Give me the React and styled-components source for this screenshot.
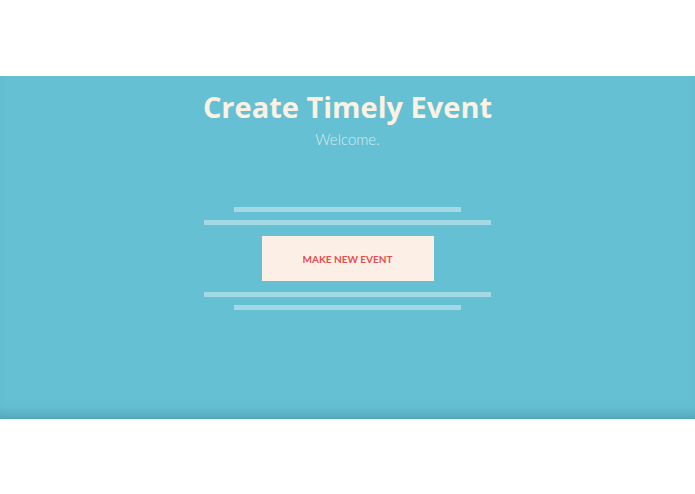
import React from 'react'
import styled, { createGlobalStyle } from 'styled-components'

const GlobalStyle = createGlobalStyle`
  body {
    margin: 0;
    background: #ffffff;
    font-family: "Open Sans", "Noto Sans", sans-serif;
  }
`;

export default function App() {
  return (
    <>
      <GlobalStyle />
      <Page>
        <Hero>
          <Title>Create Timely Event</Title>
          <Subtitle>Welcome.</Subtitle>
          <Actions>
            <Rule $short />
            <Rule />
            <MakeButton>Make new event</MakeButton>
            <Rule />
            <Rule $short />
          </Actions>
        </Hero>
      </Page>
    </>
  );
}

const Page = styled.div`
  padding-top: 76px;
  height: 494px;
  box-sizing: border-box;
`;

const Hero = styled.section`
  height: 343px;
  background: #66c0d3;
  box-shadow: inset 0 -12px 14px -10px rgba(40, 110, 130, 0.5);
  display: flex;
  flex-direction: column;
  align-items: center;
  padding-top: 13px;
  box-sizing: border-box;
`;

const Title = styled.h1`
  margin: 0;
  font-family: "Open Sans", sans-serif;
  font-weight: 700;
  font-size: 29px;
  line-height: 36px;
  color: #fbf2e3;
`;

const Subtitle = styled.p`
  margin: 2px 0 0;
  font-family: Lato, sans-serif;
  font-weight: 300;
  font-size: 15px;
  line-height: 24px;
  color: #d3edf2;
`;

const Actions = styled.div`
  margin-top: 56px;
  display: flex;
  flex-direction: column;
  align-items: center;
  gap: 8px;
`;

const Rule = styled.div`
  width: ${(p) => (p.$short ? '227px' : '287px')};
  height: 5px;
  background: rgba(255, 255, 255, 0.4);
`;

const MakeButton = styled.button`
  width: 172px;
  height: 45px;
  margin: 3px 0;
  border: none;
  background: #fcefe5;
  color: #e0504f;
  font-family: Lato, sans-serif;
  font-weight: 700;
  font-size: 10px;
  letter-spacing: 0;
  text-transform: uppercase;
  cursor: pointer;
`;
